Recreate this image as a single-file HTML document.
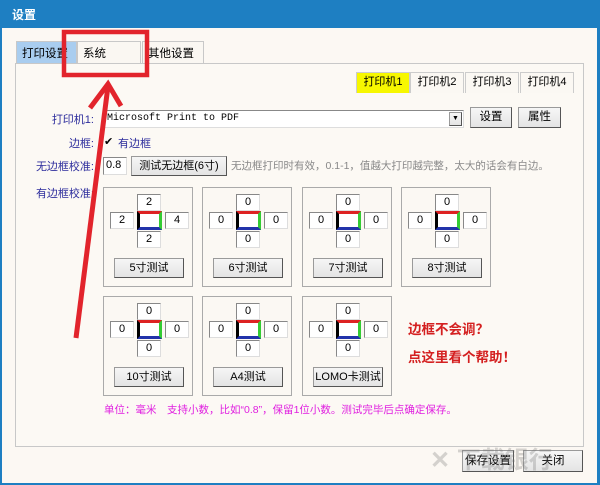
<!DOCTYPE html>
<html><head><meta charset="utf-8"><style>
*{margin:0;padding:0;box-sizing:border-box}
body{width:600px;height:485px;overflow:hidden;background:#fff;font-family:"Liberation Sans","Noto Sans CJK SC",sans-serif;font-size:11px;position:relative;white-space:nowrap}
.a{position:absolute}
.win{left:0;top:0;width:600px;height:485px;background:#1e7fc2}
.body{left:2px;top:28px;width:595px;height:455px;background:#fcf8f3}
.title{left:12px;top:6px;color:#fff;font-size:12px;font-weight:bold}
.tab{top:41px;height:22px;border:1px solid #c8c8c8;border-bottom:none;background:#faf7f2;padding:3px 5px;font-size:11.5px;color:#000}
.panel{left:15px;top:63px;width:569px;height:384px;border:1px solid #c8c8c8;background:#fcf9f4}
.ptab{top:72px;height:21px;border:1px solid #ccc;border-bottom:none;background:#fbf8f3;text-align:center;line-height:19px;font-size:11px}
.lbl{color:#2c2c9c;text-align:right;width:94px;left:0;font-size:11px}
.btn{background:linear-gradient(#f6f6f6,#e4e4e4);border:1px solid #9a9a9a;border-right-color:#555;border-bottom-color:#555;text-align:center;font-size:11px}
.inp{background:#fff;border:1px solid #888;border-right-color:#ddd;border-bottom-color:#ddd;font-size:11px;text-align:center;line-height:15px}
.box{width:90px;height:100px;border:1px solid #aaa;background:#fbf8f3}
.box .inp{position:absolute;width:24px;height:17px}
.sq{position:absolute;left:33px;top:23px;width:25px;height:19px;border-top:3px solid #d22;border-right:3px solid #3c3;border-bottom:3px solid #23a;border-left:3px solid #000;background:#fff}
.box .btn{position:absolute;left:10px;top:70px;width:70px;height:20px;line-height:18px}
</style></head><body>
<div class="a win"></div>
<div class="a title">设置</div>
<div class="a body"></div>
<div class="a panel"></div>
<div class="a tab" style="left:16px;width:61px;background:#a9cdef">打印设置</div>
<div class="a tab" style="left:77px;width:64px">系统</div>
<div class="a tab" style="left:142px;width:62px">其他设置</div>

<div class="a ptab" style="left:356px;width:54px;background:#f7f700">打印机1</div>
<div class="a ptab" style="left:410px;width:54px">打印机2</div>
<div class="a ptab" style="left:465px;width:54px">打印机3</div>
<div class="a ptab" style="left:520px;width:54px">打印机4</div>

<div class="a lbl" style="top:111px">打印机1:</div>
<div class="a inp" style="left:103px;top:110px;width:361px;height:18px;text-align:left;padding-left:3px;font-family:'Liberation Mono',monospace;font-size:10px">Microsoft Print to PDF</div>
<div class="a btn" style="left:449px;top:112px;width:13px;height:14px;font-size:7px;line-height:12px">▼</div>
<div class="a btn" style="left:470px;top:107px;width:42px;height:21px;line-height:19px;font-size:11.5px">设置</div>
<div class="a btn" style="left:518px;top:107px;width:43px;height:21px;line-height:19px;font-size:11.5px">属性</div>

<div class="a lbl" style="top:135px">边框:</div>
<div class="a" style="left:104px;top:135px;font-size:11px">✔</div>
<div class="a" style="left:118px;top:135px;color:#2c2c9c">有边框</div>

<div class="a lbl" style="top:158px">无边框校准:</div>
<div class="a inp" style="left:103px;top:157px;width:24px;height:18px;text-align:left;padding-left:2px">0.8</div>
<div class="a btn" style="left:131px;top:156px;width:96px;height:20px;line-height:18px;font-size:11px">测试无边框(6寸)</div>
<div class="a" style="left:231px;top:158px;color:#888;font-size:10.5px">无边框打印时有效，0.1-1，值越大打印越完整，太大的话会有白边。</div>

<div class="a lbl" style="top:185px">有边框校准:</div>

<div class="a box" style="left:103px;top:187px"><div class="inp" style="left:33px;top:6px">2</div><div class="inp" style="left:6px;top:24px">2</div><div class="sq"></div><div class="inp" style="left:61px;top:24px">4</div><div class="inp" style="left:33px;top:43px">2</div><div class="btn">5寸测试</div></div>
<div class="a box" style="left:202px;top:187px"><div class="inp" style="left:33px;top:6px">0</div><div class="inp" style="left:6px;top:24px">0</div><div class="sq"></div><div class="inp" style="left:61px;top:24px">0</div><div class="inp" style="left:33px;top:43px">0</div><div class="btn">6寸测试</div></div>
<div class="a box" style="left:302px;top:187px"><div class="inp" style="left:33px;top:6px">0</div><div class="inp" style="left:6px;top:24px">0</div><div class="sq"></div><div class="inp" style="left:61px;top:24px">0</div><div class="inp" style="left:33px;top:43px">0</div><div class="btn">7寸测试</div></div>
<div class="a box" style="left:401px;top:187px"><div class="inp" style="left:33px;top:6px">0</div><div class="inp" style="left:6px;top:24px">0</div><div class="sq"></div><div class="inp" style="left:61px;top:24px">0</div><div class="inp" style="left:33px;top:43px">0</div><div class="btn">8寸测试</div></div>
<div class="a box" style="left:103px;top:296px"><div class="inp" style="left:33px;top:6px">0</div><div class="inp" style="left:6px;top:24px">0</div><div class="sq"></div><div class="inp" style="left:61px;top:24px">0</div><div class="inp" style="left:33px;top:43px">0</div><div class="btn">10寸测试</div></div>
<div class="a box" style="left:202px;top:296px"><div class="inp" style="left:33px;top:6px">0</div><div class="inp" style="left:6px;top:24px">0</div><div class="sq"></div><div class="inp" style="left:61px;top:24px">0</div><div class="inp" style="left:33px;top:43px">0</div><div class="btn">A4测试</div></div>
<div class="a box" style="left:302px;top:296px"><div class="inp" style="left:33px;top:6px">0</div><div class="inp" style="left:6px;top:24px">0</div><div class="sq"></div><div class="inp" style="left:61px;top:24px">0</div><div class="inp" style="left:33px;top:43px">0</div><div class="btn">LOMO卡测试</div></div>

<div class="a" style="left:408px;top:318px;color:#d42020;font-size:13.5px;font-weight:bold">边框不会调？</div>
<div class="a" style="left:408px;top:346px;color:#d42020;font-size:13.5px;font-weight:bold">点这里看个帮助！</div>

<div class="a" style="left:104px;top:402px;color:#e020e0;font-size:10.5px">单位：毫米　支持小数，比如“0.8”，保留1位小数。测试完毕后点确定保存。</div>

<div class="a btn" style="left:462px;top:450px;width:52px;height:22px;line-height:20px;font-size:11.5px">保存设置</div>
<div class="a btn" style="left:523px;top:450px;width:60px;height:22px;line-height:20px;font-size:11.5px">关闭</div>
<div class="a" style="left:430px;top:440px;color:rgba(120,120,120,.3);font-size:24px;font-weight:bold">✕ 下载银行</div>

<svg class="a" style="left:0;top:0" width="600" height="485">
<rect x="64" y="32" width="83" height="43" fill="none" stroke="#e2242c" stroke-width="4.5"/>
<path d="M76 338 L108 86" stroke="#e2242c" stroke-width="5" fill="none"/>
<path d="M90 108 L108 84 L121 106" stroke="#e2242c" stroke-width="5" fill="none" stroke-linejoin="miter"/>
</svg>
</body></html>
